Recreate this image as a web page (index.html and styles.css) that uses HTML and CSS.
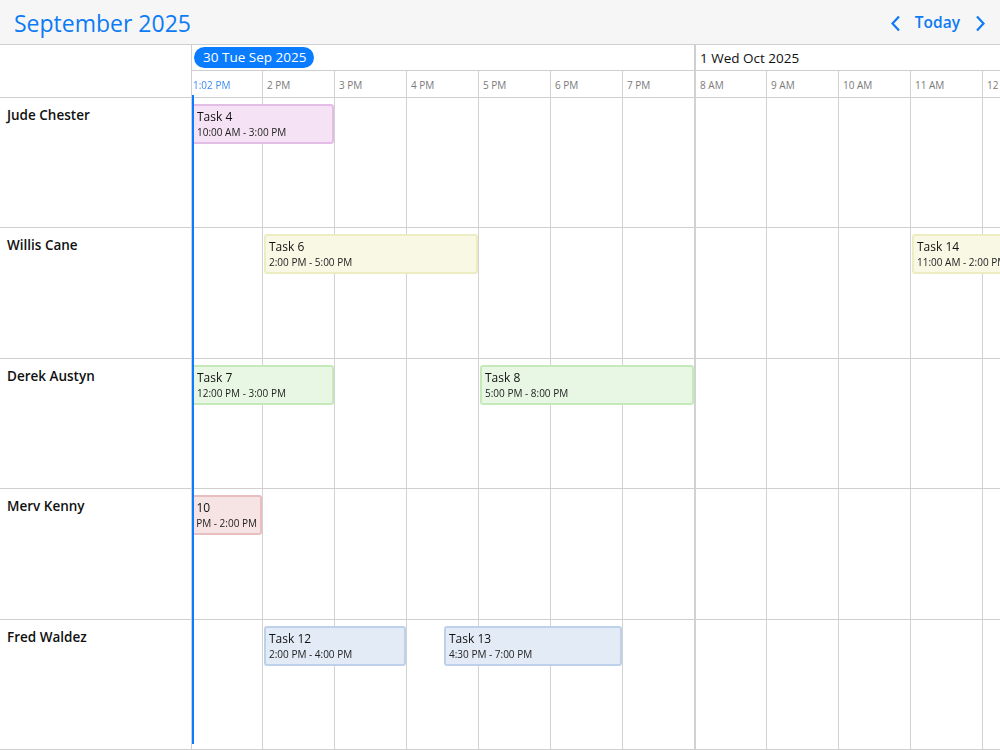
FILE: index.html
```html
<!DOCTYPE html>
<html lang="en">
<head>
<meta charset="utf-8">
<title>Timeline scheduler</title>
<link rel="stylesheet" href="styles.css">
</head>
<body>
<div class="app">
  <header class="topbar">
    <h1 class="title">September 2025</h1>
    <nav class="nav">
      <button class="nav-btn" aria-label="Previous">
        <svg width="11" height="17" viewBox="0 0 11 17"><polyline points="9,1.5 2.5,8.5 9,15.5" fill="none" stroke="currentColor" stroke-width="2.2" stroke-linejoin="miter"/></svg>
      </button>
      <button class="today">Today</button>
      <button class="nav-btn" aria-label="Next">
        <svg width="11" height="17" viewBox="0 0 11 17"><polyline points="2,1.5 8.5,8.5 2,15.5" fill="none" stroke="currentColor" stroke-width="2.2" stroke-linejoin="miter"/></svg>
      </button>
    </nav>
  </header>

  <div class="scheduler">
    <div class="corner"></div>
    <div class="resource">Jude Chester</div>
    <div class="resource">Willis Cane</div>
    <div class="resource">Derek Austyn</div>
    <div class="resource">Merv Kenny</div>
    <div class="resource">Fred Waldez</div>

    <div class="viewport">
      <div class="track">
        <div class="day day-1"><span class="day-pill">30 Tue Sep 2025</span></div>
        <div class="day day-2">1 Wed Oct 2025</div>

        <div class="cols">
          <div class="col"><span class="hour"></span></div>
          <div class="col"><span class="hour">2 PM</span></div>
          <div class="col"><span class="hour">3 PM</span></div>
          <div class="col"><span class="hour">4 PM</span></div>
          <div class="col"><span class="hour">5 PM</span></div>
          <div class="col"><span class="hour">6 PM</span></div>
          <div class="col"><span class="hour">7 PM</span></div>
          <div class="col col-daystart"><span class="hour">8 AM</span></div>
          <div class="col"><span class="hour">9 AM</span></div>
          <div class="col"><span class="hour">10 AM</span></div>
          <div class="col"><span class="hour">11 AM</span></div>
          <div class="col"><span class="hour">12 PM</span></div>
        </div>

        <div class="rows">
          <div class="row">
            <div class="event ev-pink" style="left:-215px;width:358px"><div class="ev-content"><div class="ev-title">Task 4</div><div class="ev-time">10:00 AM - 3:00 PM</div></div></div>
          </div>
          <div class="row">
            <div class="event ev-yellow" style="left:73px;width:214px"><div class="ev-content"><div class="ev-title">Task 6</div><div class="ev-time">2:00 PM - 5:00 PM</div></div></div>
            <div class="event ev-yellow" style="left:721px;width:214px"><div class="ev-content"><div class="ev-title">Task 14</div><div class="ev-time">11:00 AM - 2:00 PM</div></div></div>
          </div>
          <div class="row">
            <div class="event ev-green" style="left:-71px;width:214px"><div class="ev-content"><div class="ev-title">Task 7</div><div class="ev-time">12:00 PM - 3:00 PM</div></div></div>
            <div class="event ev-green" style="left:289px;width:214px"><div class="ev-content"><div class="ev-title">Task 8</div><div class="ev-time">5:00 PM - 8:00 PM</div></div></div>
          </div>
          <div class="row">
            <div class="event ev-red" style="left:-71px;width:142px"><div class="ev-content"><div class="ev-title">Task 10</div><div class="ev-time">12:00 PM - 2:00 PM</div></div></div>
          </div>
          <div class="row">
            <div class="event ev-blue" style="left:73px;width:142px"><div class="ev-content"><div class="ev-title">Task 12</div><div class="ev-time">2:00 PM - 4:00 PM</div></div></div>
            <div class="event ev-blue" style="left:253px;width:178px"><div class="ev-content"><div class="ev-title">Task 13</div><div class="ev-time">4:30 PM - 7:00 PM</div></div></div>
          </div>
        </div>
      </div>

      <div class="now-label">1:02 PM</div>
      <div class="now-line"></div>
    </div>
  </div>
</div>
</body>
</html>
```

FILE: styles.css
```css
* {
  box-sizing: border-box;
}

html, body {
  margin: 0;
  padding: 0;
  height: 100%;
  background: #ffffff;
  font-family: "Segoe UI", "Open Sans", "Noto Sans", sans-serif;
  color: #111;
  overflow: hidden;
}

.app {
  height: 100vh;
  display: flex;
  flex-direction: column;
}

/* ---------- top bar ---------- */
.topbar {
  height: 45px;
  flex: none;
  display: flex;
  align-items: center;
  justify-content: space-between;
  background: #f6f6f6;
  border-bottom: 1px solid #cfcfcf;
  padding: 2px 14px 0 14px;
}

.title {
  margin: 0;
  font-size: 23px;
  font-weight: 400;
  color: #0d7bf5;
  line-height: 1;
}

.nav {
  display: flex;
  align-items: center;
}

.nav-btn,
.today {
  border: 0;
  background: transparent;
  color: #0d7bf5;
  padding: 0;
  margin: 0;
  font-family: inherit;
  cursor: pointer;
  display: flex;
  align-items: center;
}

.nav-btn svg {
  display: block;
}

.today {
  font-size: 15.5px;
  font-weight: 600;
  margin: 0 15px 0 14px;
  line-height: 1;
}

/* ---------- scheduler ---------- */
.scheduler {
  flex: 1;
  display: grid;
  grid-template-columns: 192px 1fr;
  grid-template-rows: 53px repeat(5, 1fr);
  min-height: 0;
}

.corner {
  grid-column: 1;
  grid-row: 1;
  border-right: 1px solid #cfcfcf;
  border-bottom: 1px solid #cfcfcf;
}

.resource {
  grid-column: 1;
  border-right: 1px solid #cfcfcf;
  border-bottom: 1px solid #cfcfcf;
  padding: 8px 0 0 7px;
  font-size: 13.5px;
  font-weight: 600;
  line-height: 19px;
  color: #111;
}

.viewport {
  grid-column: 2;
  grid-row: 1 / -1;
  position: relative;
  overflow: hidden;
  min-width: 0;
}

.track {
  margin-left: -1px;
  height: 100%;
  width: max-content;
  display: grid;
  grid-template-columns: repeat(12, 72px);
  grid-template-rows: 26px 26px 1fr;
}

/* day header */
.day {
  grid-row: 1;
  border-bottom: 1px solid #cfcfcf;
  display: flex;
  align-items: center;
  font-size: 13.5px;
  white-space: nowrap;
}

.day-1 {
  grid-column: 1 / 8;
  border-right: 1px solid #cfcfcf;
  padding-left: 3px;
}

.day-2 {
  grid-column: 8 / -1;
  border-left: 1px solid #cfcfcf;
  padding-left: 4px;
  color: #111;
}

.day-pill {
  background: #0a7cff;
  color: #fff;
  border-radius: 11px;
  height: 21px;
  line-height: 21px;
  padding: 0 8px 0 9px;
}

/* hour columns: labels + vertical grid lines */
.cols {
  grid-row: 2 / -1;
  grid-column: 1 / -1;
  display: grid;
  grid-template-columns: repeat(12, 72px);
}

.col {
  border-right: 1px solid #d2d2d2;
}

.col-daystart {
  border-left: 1px solid #d2d2d2;
}

.hour {
  display: flex;
  align-items: center;
  height: 27px;
  padding-left: 4px;
  font-size: 10px;
  color: #7a7a7a;
  white-space: nowrap;
}

/* resource rows */
.rows {
  grid-row: 3;
  grid-column: 1 / -1;
  border-top: 1px solid #cfcfcf;
  display: grid;
  grid-template-rows: repeat(5, 1fr);
}

.row {
  position: relative;
  border-bottom: 1px solid #cfcfcf;
}

.event {
  position: absolute;
  top: 6px;
  height: 40px;
  border: 2px solid;
  border-radius: 3px;
  padding: 2px 3px;
  white-space: nowrap;
}

.ev-content {
  position: sticky;
  left: 5px;
  width: max-content;
}

.ev-title {
  font-size: 12px;
  line-height: 17px;
  color: #111;
}

.ev-time {
  font-size: 10px;
  line-height: 14px;
  color: #222;
}

.ev-pink {
  background: #f5e3f5;
  border-color: #e4bde7;
}

.ev-yellow {
  background: #f8f8e5;
  border-color: #ecedc2;
}

.ev-green {
  background: #e8f7e4;
  border-color: #c6e9ba;
}

.ev-red {
  background: #f6e3e3;
  border-color: #e8bebe;
}

.ev-blue {
  background: #e3ebf6;
  border-color: #bdd1ea;
}

/* current time marker */
.now-line {
  position: absolute;
  left: 0;
  top: 50px;
  bottom: 6px;
  width: 2px;
  background: #0a7cff;
}

.now-label {
  position: absolute;
  left: 1px;
  top: 26px;
  height: 27px;
  display: flex;
  align-items: center;
  font-size: 10px;
  color: #3d8bf0;
  white-space: nowrap;
}
```
